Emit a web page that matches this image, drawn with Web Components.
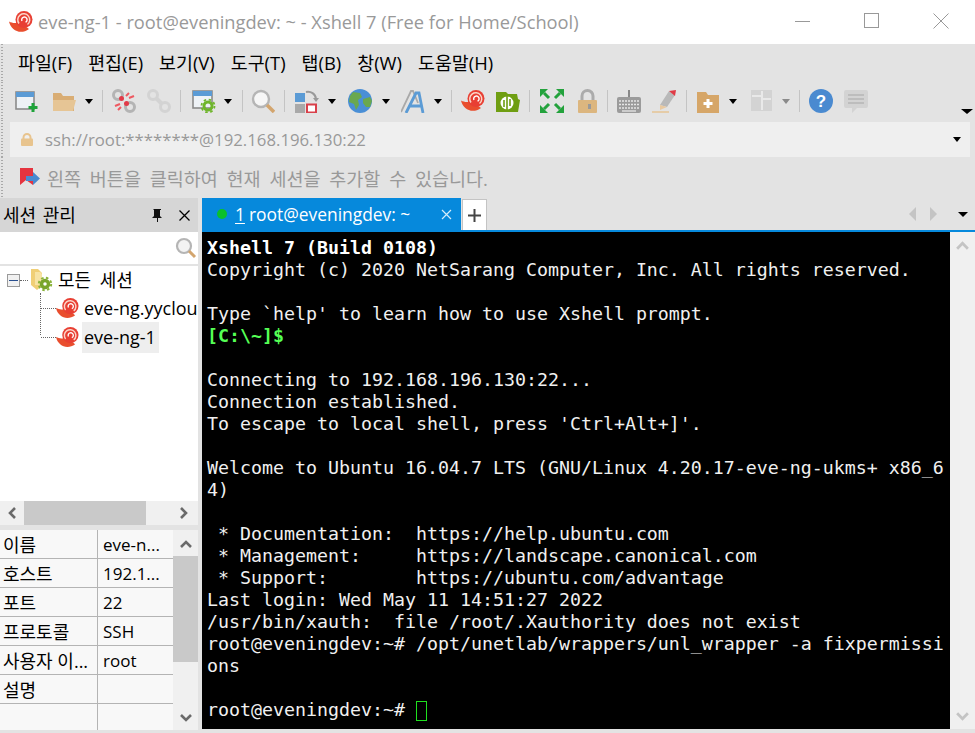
<!DOCTYPE html>
<html lang="ko">
<head>
<meta charset="utf-8">
<title>eve-ng-1 - Xshell 7</title>
<style>
  html, body { margin: 0; height: 100%; overflow: hidden; background: #e3e3e3; }
  body { font-family: "Open Sans", "Noto Sans CJK KR", sans-serif; }
  xs-app { width: 975px; height: 733px; }
</style>
</head>
<body>
<xs-app>
  <xs-titlebar>eve-ng-1 - root@eveningdev: ~ - Xshell 7 (Free for Home/School)</xs-titlebar>
  <xs-menubar></xs-menubar>
  <xs-toolbar></xs-toolbar>
  <xs-addressbar>ssh://root:********@192.168.196.130:22</xs-addressbar>
  <xs-hintbar>왼쪽 버튼을 클릭하여 현재 세션을 추가할 수 있습니다.</xs-hintbar>
  <xs-main>
    <xs-sessions slot="left"></xs-sessions>
    <xs-tabs slot="right"></xs-tabs>
    <xs-terminal slot="right"></xs-terminal>
  </xs-main>
</xs-app>

<script>
const SNAIL = `<path d="M0 11.500C3 13 6 13.500 8 12.500L16 16 20 19C12 25 2 21 0 11.500Z" fill="#e94e2e"/>
  <circle cx="15" cy="9.500" r="8.500" fill="#e83f33"/>
  <path d="M10 13.500A6 6 0 1 1 18.500 14.500" fill="none" stroke="#fbd5c8" stroke-width="1.500"/>
  <path d="M13 11a2.700 2.700 0 1 1 3.500 1.200" fill="none" stroke="#fff" stroke-width="1.400"/>`;
const snail = (s) => `<svg width="${s}" height="${s}" viewBox="0 0 24 24">${SNAIL}</svg>`;

const ICONS = {
  newsession: `<rect x="1" y="3" width="18" height="17" fill="#eef2f6" stroke="#8b8b8b" stroke-width="1.600"/><rect x="1" y="3" width="18" height="5" fill="#5b9bd5"/><path d="M18 14v9M13.500 18.500h9" stroke="#1fa33a" stroke-width="3"/>`,
  folder: `<path d="M1 4h8l2 3h11v15H1Z" fill="#d9ad74"/><path d="M1 11h23l-3 11H1Z" fill="#e6c595"/>`,
  disconnect: `<g fill="none" stroke="#b4b4b4" stroke-width="3"><circle cx="6" cy="6" r="4.500"/><circle cx="18" cy="18" r="4.500"/></g><circle cx="9.500" cy="9.500" r="2.500" fill="#e23a48"/><circle cx="14.500" cy="14.500" r="2.500" fill="#e23a48"/><path d="M14 7l3-3M17 9l5-2M3 17l5-2M6 21l3-3" stroke="#ee5a62" stroke-width="2"/>`,
  reconnect: `<g fill="none" stroke="#d3d3d3" stroke-width="3"><circle cx="6" cy="6" r="4.500"/><circle cx="18" cy="18" r="4.500"/><path d="M9 9l6 6" stroke-width="4"/></g>`,
  props: `<rect x="1" y="2" width="19" height="17" fill="#eef2f6" stroke="#8b8b8b" stroke-width="1.600"/><rect x="1" y="2" width="19" height="5" fill="#5b9bd5"/><circle cx="16" cy="17" r="4" fill="none" stroke="#6fb52c" stroke-width="3"/><circle cx="16" cy="17" r="6.500" fill="none" stroke="#6fb52c" stroke-width="1.800" stroke-dasharray="2.500 2.600"/>`,
  search: `<circle cx="10" cy="10" r="8" fill="#f6f6f6" stroke="#b5b5b5" stroke-width="2.400"/><path d="M16 16l7 7" stroke="#d3a56e" stroke-width="3.500"/>`,
  layout: `<rect x="0" y="4" width="10" height="9" fill="#5b9bd5"/><rect x="0" y="15" width="10" height="9" fill="#a9a9a9"/><rect x="12" y="15.500" width="9" height="8" fill="#fff" stroke="#d9404a" stroke-width="2"/><path d="M11 3a8 8 0 0 1 10 7" fill="none" stroke="#9a9a9a" stroke-width="2"/><path d="M18 9h6l-3 4Z" fill="#9a9a9a"/>`,
  globe: `<circle cx="12" cy="12" r="12" fill="#4a8fd6"/><path d="M5 3l7 1 2 4-4 3 1 5-3 5-2-6-5-2 1-6ZM15 10l7-2 2 4-2 6-4 0-3-4Z" fill="#6aa84f"/>`,
  font: `<path d="M0 23L10 2l2 0 5 12" stroke="#a9a9a9" stroke-width="1.800" fill="none"/><path d="M5 24L15 4h3l4 20M9 17h11" stroke="#5b9bd5" stroke-width="2.800" fill="none"/>`,
  snail: SNAIL,
  xftp: `<path d="M0 3h10l2 2h9l1 5 2 1-2 12H0Z" fill="#6f9e12"/><circle cx="11" cy="14" r="6.500" fill="#fff"/><path d="M11 7v14M8 11v7M14 10v7" stroke="#6f9e12" stroke-width="1.600"/>`,
  full: `<path d="M4 4l5 5M4 20l5-5M20 4l-5 5M20 20l-5-5" stroke="#23a23c" stroke-width="3"/><path d="M0 0h8L0 8ZM24 0h-8l8 8ZM0 24h8L0 16ZM24 24h-8l8-8Z" fill="#23a23c"/>`,
  lock: `<path d="M7 12V7a5.500 5.500 0 0 1 11 0v5" fill="none" stroke="#ababab" stroke-width="3"/><rect x="3" y="11" width="19" height="13" rx="1" fill="#dcb67f"/><rect x="13" y="15" width="3" height="5" fill="#999"/>`,
  keyboard: `<path d="M12 1v7" stroke="#888" stroke-width="2"/><rect x="0" y="8" width="24" height="16" rx="2" fill="#9b9b9b"/><path d="M2 12h20M2 15.500h20M2 19h20" stroke="#e6e6e6" stroke-width="1.500" stroke-dasharray="2 1"/><path d="M5 22h14" stroke="#ddd" stroke-width="1.500"/>`,
  pen: `<path d="M8 16L17 2l6 4-8 12Z" fill="#b9b9b9"/><path d="M17 2l7-1-1 6Z" fill="#e03a45"/><path d="M8 16l7 2-7 3Z" fill="#e9c9a0"/><path d="M0 23h17" stroke="#e6c595" stroke-width="1.500"/>`,
  folderplus: `<path d="M0 3h9l2 3h11v18H0Z" fill="#d6a668"/><path d="M11 10v9M6.500 14.500h9" stroke="#fff" stroke-width="3"/>`,
  tile: `<rect x="1" y="1" width="21" height="21" fill="#d3d3d3"/><path d="M12 2v19M12 10h9M2 7h10" stroke="#e9e9e9" stroke-width="2"/>`,
  help: `<circle cx="12" cy="12" r="12" fill="#4a8ad0"/><text x="12" y="18" font-size="17" font-weight="700" text-anchor="middle" fill="#fff" font-family="Liberation Sans, sans-serif">?</text>`,
  chat: `<path d="M2 1h20a2 2 0 0 1 2 2v14a2 2 0 0 1-2 2H13l-5 5v-5H2a2 2 0 0 1-2-2V3a2 2 0 0 1 2-2Z" fill="#d3d3d3"/><path d="M4 6h16M4 10h16M4 14h16" stroke="#bdbdbd" stroke-width="2"/>`
};

function define(name, css, html, init) {
  customElements.define(name, class extends HTMLElement {
    connectedCallback() {
      if (this.shadowRoot) return;
      this.attachShadow({ mode: 'open' });
      this.shadowRoot.innerHTML = `<style>${css}</style>${html}`;
      if (init) init(this.shadowRoot, this);
    }
  });
}

const grip = `background-image: repeating-linear-gradient(to bottom, #a9a9a9 0 1px, transparent 1px 3px); background-size: 2px 100%; background-repeat: no-repeat; background-position: 1px 0;`;

define('xs-app', `:host { display: flex; flex-direction: column; color: #000; }`, `<slot></slot>`);

define('xs-titlebar', `
  :host { display: flex; align-items: center; height: 44px; background: #fff; padding-left: 9px; flex: none; }
  .t { margin-left: 5px; font-size: 18.300px; color: #999; white-space: nowrap; margin-top: -1px; }
  .sp { flex: 1; }
  .b { width: 69px; height: 44px; display: flex; align-items: center; justify-content: center; margin-top: -2px; flex: none; }
  svg { display: block; }
`, `${snail(24)}<span class="t"><slot></slot></span><span class="sp"></span>
  <span class="b"><svg width="16" height="16"><path d="M0 8.500h15" stroke="#999"/></svg></span>
  <span class="b"><svg width="16" height="16"><rect x=".5" y=".5" width="14" height="14" fill="none" stroke="#999"/></svg></span>
  <span class="b"><svg width="16" height="16"><path d="M.5.500l15 15M15.500.500l-15 15" stroke="#999"/></svg></span>`);

define('xs-menubar', `
  :host { display: flex; gap: 16px; align-items: center; height: 38px; padding: 0 0 2px 18px; box-sizing: border-box; flex: none; font-size: 18.400px; ${grip} }
  span { white-space: nowrap; }
`, ['파일(F)', '편집(E)', '보기(V)', '도구(T)', '탭(B)', '창(W)', '도움말(H)'].map(m => `<span>${m}</span>`).join(''));

// name, or 'sep', 'arrow', 'arrow-off'; second value is the space before it
const TOOLS = [
  ['newsession', 0], ['folder', 13], ['arrow', 9], ['sep', 9], ['disconnect', 9], ['reconnect', 11], ['sep', 9],
  ['props', 11], ['arrow', 8], ['sep', 10], ['search', 8], ['sep', 9], ['layout', 10], ['arrow', 9],
  ['globe', 12], ['arrow', 10], ['font', 11], ['arrow', 9], ['sep', 9], ['snail', 9], ['xftp', 11], ['sep', 9],
  ['full', 10], ['lock', 11], ['sep', 8], ['keyboard', 9], ['pen', 11], ['sep', 10], ['folderplus', 10],
  ['arrow', 8], ['tile', 13], ['arrow-off', 8], ['sep', 9], ['help', 9], ['chat', 11]
];
define('xs-toolbar', `
  :host { display: flex; align-items: center; position: relative; height: 38px; padding-left: 15px; flex: none; ${grip} }
  svg { display: block; flex: none; }
  .sep { width: 1px; height: 22px; background: #c4c4c4; flex: none; }
  .arrow { width: 0; height: 0; border: 4px solid transparent; border-top: 5px solid #000; border-bottom: 0; flex: none; }
  .off { border-top-color: #8a8a8a; }
  .more { position: absolute; right: 2px; bottom: 6px; border-width: 5px 6px 0; }
`, TOOLS.map(([n, g]) => {
  const st = `style="margin-left:${g}px"`;
  if (n === 'sep') return `<span class="sep" ${st}></span>`;
  if (n === 'arrow') return `<span class="arrow" ${st}></span>`;
  if (n === 'arrow-off') return `<span class="arrow off" ${st}></span>`;
  return `<svg width="24" height="24" viewBox="0 0 24 24" ${st}>${ICONS[n]}</svg>`;
}).join('') + `<span class="arrow more"></span>`);

define('xs-addressbar', `
  :host { display: block; padding: 2px 5px 0 10px; flex: none; ${grip} }
  .box { display: flex; align-items: center; height: 35px; background: #efefef; padding-left: 10px; box-sizing: border-box; }
  .t { margin-left: 11px; font-size: 16.750px; color: #999; white-space: nowrap; flex: 1; }
  .arrow { width: 0; height: 0; border: 4px solid transparent; border-top: 5px solid #000; border-bottom: 0; margin-right: 9px; }
  svg { display: block; }
`, `<div class="box"><svg width="14" height="14" viewBox="0 0 14 14"><path d="M3.500 7V4.500a3.500 3.500 0 0 1 7 0V7" fill="none" stroke="#e8c48e" stroke-width="2"/><rect y="5.500" x="1" width="12" height="7.500" rx="1" fill="#e8c48e"/></svg><span class="t"><slot></slot></span><span class="arrow"></span></div>`);

define('xs-hintbar', `
  :host { display: flex; align-items: center; height: 41px; padding-left: 20px; flex: none; ${grip} }
  .t { margin-left: 7px; font-size: 18.500px; word-spacing: 4px; color: #999; white-space: nowrap; }
  svg { display: block; }
`, `<svg width="20" height="20" viewBox="0 0 20 20"><path d="M0 0h13v17l-7-5-6 5Z" fill="#e5343f"/><path d="M6 8h7V4l7 6.500-7 6.500v-4H6Z" fill="#4a8ad0"/></svg><span class="t"><slot></slot></span>`);

define('xs-main', `
  :host { display: flex; height: 531px; flex: none; }
  .l { width: 198px; flex: none; display: flex; }
  .r { margin-left: 4px; flex: 1; min-width: 0; display: flex; flex-direction: column; }
`, `<div class="l"><slot name="left"></slot></div><div class="r"><slot name="right"></slot></div>`);

const chev = (d, c, w = 14) => {
  const p = { l: 'M9 2L4 7l5 5', r: 'M5 2l5 5-5 5', u: 'M2 9l5-5 5 5', d: 'M2 5l5 5 5-5' }[d];
  return `<svg width="${w}" height="${w}" viewBox="0 0 14 14"><path d="${p}" fill="none" stroke="${c}" stroke-width="2.600"/></svg>`;
};
const FOLDER = `<svg width="22" height="24" viewBox="0 0 22 24"><path d="M0 1h7l4 4v13l-5 4-6-5Z" fill="#f0cf76"/><path d="M4 4h5l2 2v11H4Z" fill="#f7e3a4"/><circle cx="14" cy="16" r="3.500" fill="none" stroke="#7aa52c" stroke-width="3.500"/><circle cx="14" cy="16" r="6.200" fill="none" stroke="#8ab33a" stroke-width="2" stroke-dasharray="2.500 2.400"/></svg>`;

const PROPS = [['이름', 'eve-n...'], ['호스트', '192.1...'], ['포트', '22'], ['프로토콜', 'SSH'], ['사용자 이...', 'root'], ['설명', ''], ['', '']];
define('xs-sessions', `
  :host { display: flex; flex-direction: column; width: 198px; }
  .head { display: flex; align-items: center; height: 34px; background: #d6d6d6; padding: 0 7px 0 3px; font-size: 18px; word-spacing: 2px; flex: none; }
  .head b { font-weight: 400; flex: 1; white-space: nowrap; margin-top: -2px; }
  .head svg { display: block; margin-left: 12px; }
  .search { height: 32px; background: #fff; border-bottom: 2px solid #e3e3e3; display: flex; justify-content: flex-end; align-items: center; padding-right: 1px; flex: none; }
  .tree { height: 235px; background: #fff; flex: none; overflow: hidden; font-size: 18px; white-space: nowrap; }
  .row { display: flex; align-items: center; height: 29px; }
  .root { padding-left: 7px; height: 28px; }
  .plus { width: 13px; height: 13px; border: 1px solid #9a9a9a; background: #f1f1f1; position: relative; flex: none; box-sizing: border-box; }
  .plus::after { content: ""; position: absolute; left: 1px; right: 1px; top: 5px; height: 1px; background: #2a4f8f; }
  .dh { width: 8px; border-top: 1px dotted #666; flex: none; }
  .root .dh { margin-right: 3px; }
  .root .label { margin: -3px 0 0 5px; font-size: 18px; word-spacing: 4px; }
  .child { padding-left: 41px; }
  .child .dh { width: 15px; }
  .child svg { flex: none; }
  .child .label { margin-left: 3px; padding: 0 3px 0 2px; line-height: 31px; }
  .child.sel .label { background: #eee; }
  .vline { position: absolute; left: 40px; top: 27px; height: 42px; border-left: 1px dotted #666; }
  .treewrap { position: relative; }
  .hs { height: 24px; background: #f0f0f0; flex: none; display: flex; align-items: center; justify-content: space-between; padding: 0 8px 0 6px; position: relative; }
  .hs i { position: absolute; left: 24px; width: 122px; top: 0; bottom: 0; background: #c9c9c9; }
  .gap { height: 5px; background: #e3e3e3; flex: none; }
  .bottom { display: flex; flex: 1; min-height: 0; }
  .grid { width: 173px; flex: none; display: grid; grid-template-columns: 98px 75px; grid-auto-rows: 29px; background: #f8f8f8; font-size: 18px; align-content: start; height: 200px; overflow: hidden; }
  .grid div { border-bottom: 1px solid #b4b4b4; white-space: nowrap; overflow: hidden; padding-left: 3px; display: flex; align-items: center; box-sizing: border-box; }
  .grid div:nth-child(odd) { border-right: 1px solid #b4b4b4; }
  .grid div:nth-child(even) { padding-left: 5px; font-size: 17px; }
  .vs { flex: 1; background: #f0f0f0; display: flex; flex-direction: column; align-items: center; justify-content: space-between; position: relative; padding: 0 0 6px; box-sizing: border-box; height: 200px; }
  .vs i { position: absolute; left: 0; right: 0; top: 26px; height: 106px; background: #c9c9c9; }
  .vs svg:first-of-type { margin-top: 8px; }
  svg { display: block; }
`, `
  <div class="head"><b>세션 관리</b>
    <svg width="14" height="14" viewBox="0 0 14 14" style="margin-right:2px"><path d="M4 1h7v1h-1v6l2 2H8v4H7v-4H2l2-2V2H3Z" fill="#111"/></svg>
    <svg width="13" height="13" viewBox="0 0 13 13"><path d="M1.500 1.500l10 10M11.500 1.500l-10 10" stroke="#000" stroke-width="1.300"/></svg>
  </div>
  <div class="search"><svg width="22" height="22" viewBox="0 0 22 22"><circle cx="9" cy="9" r="7" fill="#f3f3f3" stroke="#b5b5b5" stroke-width="2.200"/><path d="M14 14l6 6" stroke="#d3a56e" stroke-width="3"/></svg></div>
  <div class="tree"><div class="treewrap">
    <div class="row root"><span class="plus"></span><span class="dh"></span>${FOLDER}<span class="label">모든 세션</span></div>
    <div class="row child"><span class="dh"></span>${snail(23)}<span class="label">eve-ng.yyclou</span></div>
    <div class="row child sel"><span class="dh"></span>${snail(23)}<span class="label">eve-ng-1</span></div>
    <i class="vline"></i>
  </div></div>
  <div class="hs">${chev('l', '#6a6a6a')}<i></i>${chev('r', '#6a6a6a')}</div>
  <div class="gap"></div>
  <div class="bottom">
    <div class="grid">${PROPS.map(([k, v]) => `<div>${k}</div><div>${v}</div>`).join('')}</div>
    <div class="vs">${chev('u', '#6a6a6a')}<i></i>${chev('d', '#6a6a6a')}</div>
  </div>`);

define('xs-tabs', `
  :host { display: flex; height: 34px; flex: none; position: relative; box-sizing: border-box; }
  .tab { width: 259px; height: 32px; background: #0689dc; color: #fff; display: flex; align-items: center; padding-left: 15px; box-sizing: border-box; font-size: 17.400px; white-space: nowrap; flex: none; }
  .dot { width: 10px; height: 10px; border-radius: 50%; background: #0ac02c; flex: none; margin-right: 8px; }
  u { margin-right: 4px; text-underline-offset: 2px; }
  .x { margin-left: auto; margin-right: 9px; display: block; }
  .plus { width: 25px; height: 31px; margin: 1px 0 0 1px; background: #fff; border: 1px solid #c4c4c4; border-bottom: 0; box-sizing: border-box; display: flex; align-items: center; justify-content: center; flex: none; }
  .sp { flex: 1; }
  .nav { display: flex; align-items: center; gap: 14px; margin-right: 7px; height: 32px; }
  .tri { width: 0; height: 0; border-top: 7px solid transparent; border-bottom: 7px solid transparent; }
  .tl { border-right: 7px solid #c4c4c4; }
  .tr { border-left: 7px solid #c4c4c4; }
  .drop { width: 0; height: 0; border: 5px solid transparent; border-top: 5px solid #000; border-bottom: 0; margin-left: 7px; }
  .line { position: absolute; left: 0; right: 0; bottom: 0; height: 2px; background: #0689dc; }
  svg { display: block; }
`, `<div class="tab"><span class="dot"></span><u>1</u><span>root@eveningdev: ~</span>
    <svg class="x" width="11" height="11" viewBox="0 0 11 11"><path d="M1 1l9 9M10 1l-9 9" stroke="#d5ecfa" stroke-width="1.200"/></svg></div>
  <div class="plus"><svg width="13" height="13" viewBox="0 0 13 13"><path d="M6.500 0v13M0 6.500h13" stroke="#444" stroke-width="2"/></svg></div>
  <span class="sp"></span>
  <div class="nav"><span class="tri tl"></span><span class="tri tr"></span><span class="drop"></span></div>
  <span class="line"></span>`);

const TERM = `<b>Xshell 7 (Build 0108)</b>
Copyright (c) 2020 NetSarang Computer, Inc. All rights reserved.

Type \`help' to learn how to use Xshell prompt.
<g>[C:\\~]$</g>

Connecting to 192.168.196.130:22...
Connection established.
To escape to local shell, press 'Ctrl+Alt+]'.

Welcome to Ubuntu 16.04.7 LTS (GNU/Linux 4.20.17-eve-ng-ukms+ x86_6
4)

 * Documentation:  https://help.ubuntu.com
 * Management:     https://landscape.canonical.com
 * Support:        https://ubuntu.com/advantage
Last login: Wed May 11 14:51:27 2022
/usr/bin/xauth:  file /root/.Xauthority does not exist
root@eveningdev:~# /opt/unetlab/wrappers/unl_wrapper -a fixpermissi
ons

root@eveningdev:~# <c></c>`;
define('xs-terminal', `
  :host { display: flex; flex: 1; min-height: 0; }
  pre { margin: 0; flex: 1; background: #000; color: #f0f0f0; padding: 5px 0 0 5px; box-sizing: border-box; font: 18.270px/22px "DejaVu Sans Mono", monospace; overflow: hidden; }
  b { color: #fff; }
  g { color: #55ff55; font-weight: 700; }
  c { display: inline-block; width: 11px; height: 20px; border: 1px solid #1fe01f; box-sizing: border-box; vertical-align: -5px; }
  .vs { width: 25px; flex: none; background: #f0f0f0; display: flex; flex-direction: column; align-items: center; justify-content: space-between; padding: 7px 0 6px; box-sizing: border-box; }
  svg { display: block; }
`, `<pre>${TERM}</pre><div class="vs">${chev('u', '#c4c4c4', 15)}${chev('d', '#c4c4c4', 15)}</div>`);
</script>
</body>
</html>
